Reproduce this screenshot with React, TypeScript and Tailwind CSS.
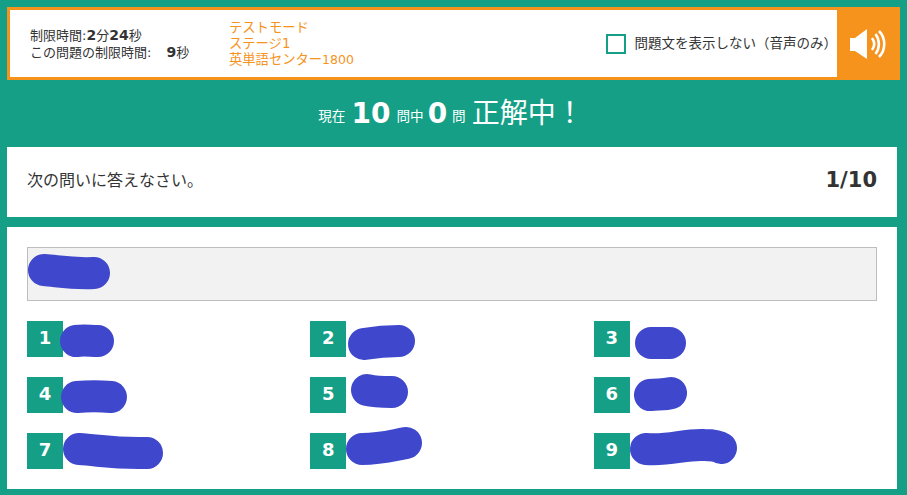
const font = "font-['DejaVu_Sans','Noto_Sans_CJK_JP',sans-serif]";

interface Scribble {
  width: number;
  height: number;
  d: string;
  className: string;
}

const Ink = ({ width, height, d, className }: Scribble) => (
  <svg width={width} height={height} className={"shrink-0 overflow-visible " + className} fill="none">
    <path d={d} stroke="#3f48cc" strokeWidth="32" strokeLinecap="round" strokeLinejoin="round" />
  </svg>
);

const choices: Scribble[] = [
  { width: 54, height: 32, d: "M16 16 C24 15 30 16 38 16", className: "-ml-[3px] mt-[4px]" },
  { width: 67, height: 35, d: "M16 19 C28 17 38 16 51 16", className: "ml-[2px] mt-[4px]" },
  { width: 51, height: 32, d: "M16 16 C24 16 28 16 35 16", className: "ml-[5px] mt-[6px]" },
  { width: 66, height: 32, d: "M16 16 C28 15 38 15 50 16", className: "-ml-[2px] mt-[4px]" },
  { width: 57, height: 33, d: "M16 16 C24 18 30 18 41 18", className: "ml-[5px] -mt-[3px]" },
  { width: 53, height: 34, d: "M16 18 C24 17 30 18 37 16", className: "ml-[4px] mt-0" },
  { width: 100, height: 36, d: "M16 16 C36 17 50 21 84 20", className: "ml-0 mt-0" },
  { width: 76, height: 38, d: "M16 22 C34 22 44 19 60 16", className: "ml-0 -mt-[6px]" },
  { width: 107, height: 36, d: "M16 20 C40 22 54 15 74 16 C82 16 88 17 91 19", className: "ml-0 -mt-[4px]" },
];

export default function App() {
  return (
    <div className={"h-[495px] w-[907px] overflow-hidden bg-[#159f86] pt-[7px] text-[#333333] " + font}>
      <header className="flex h-[73px] w-[893px] pl-[7px] box-content">
        <div className="flex flex-1 items-center border-[3px] border-r-0 border-[#f5931d] bg-white pl-[20px]">
          <div className="w-[199px] text-[13px] leading-[17px]">
            <p>
              制限時間:<b className="text-[14px]">2</b>分<b className="text-[14px]">24</b>秒
            </p>
            <p>
              この問題の制限時間:<b className="ml-[15px] text-[14px]">9</b>秒
            </p>
          </div>
          <div className="text-[13.3px] leading-[16px] text-[#f5931d]">
            <p>テストモード</p>
            <p>ステージ1</p>
            <p>
              英単語センター<span className="text-[12.5px]">1800</span>
            </p>
          </div>
          <label className="ml-auto flex items-center text-[13.5px]">
            <span className="h-[20px] w-[20px] border-[2px] border-[#159f86]" />
            <span className="ml-[9px]">問題文を表示しない（音声のみ）</span>
          </label>
        </div>
        <div className="flex w-[63px] items-center justify-center bg-[#f5931d]">
          <svg width="38" height="32" viewBox="0 0 38 32" fill="none">
            <path d="M0 10 H5 L17 1 V31 L5 23 H0 Z" fill="#ffffff" />
            <path d="M22 10 C25 14 25 18 22 22" stroke="#ffffff" strokeWidth="2.6" />
            <path d="M25.5 6 C30 12 30 20 25.5 26" stroke="#ffffff" strokeWidth="2.6" />
            <path d="M29 3 C36 10 36 22 29 29" stroke="#ffffff" strokeWidth="2.6" />
          </svg>
        </div>
      </header>

      <div className="flex h-[67px] items-center justify-center pr-[5px] text-white">
        <span className="mt-[5px] text-[13.6px]">現在</span>
        <b className="ml-[6px] text-[28px]">10</b>
        <span className="ml-[6px] mt-[5px] text-[13.6px]">問中</span>
        <b className="ml-[4px] text-[28px]">0</b>
        <span className="ml-[5px] mt-[5px] text-[13.6px]">問</span>
        <span className="ml-[6px] text-[28px]">正解中！</span>
      </div>

      <div className="ml-[7px] flex h-[70px] w-[890px] items-center justify-between bg-white pb-[3px] pl-[20px] pr-[20px]">
        <p className="text-[16px]">次の問いに答えなさい。</p>
        <b className="text-[21px]">1/10</b>
      </div>

      <main className="ml-[7px] mt-[10px] h-[262px] w-[890px] bg-white px-[20px] pt-[20px]">
        <div className="h-[54px] border border-[#bdbdbd] bg-[#f2f2f2]">
          <Ink
            width={82}
            height={35}
            d="M16 16 C30 17 42 20 66 19"
            className="ml-0 mt-[6px]"
          />
        </div>
        <div className="mt-[20px] grid grid-cols-3 gap-y-[20px]">
          {choices.map((c, i) => (
            <div key={i} className="flex h-[36px] items-start">
              <span className="flex h-[36px] w-[36px] shrink-0 items-center justify-center bg-[#159f86] pb-[4px] text-[18px] font-bold text-white">
                {i + 1}
              </span>
              <Ink {...c} />
            </div>
          ))}
        </div>
      </main>
    </div>
  );
}
